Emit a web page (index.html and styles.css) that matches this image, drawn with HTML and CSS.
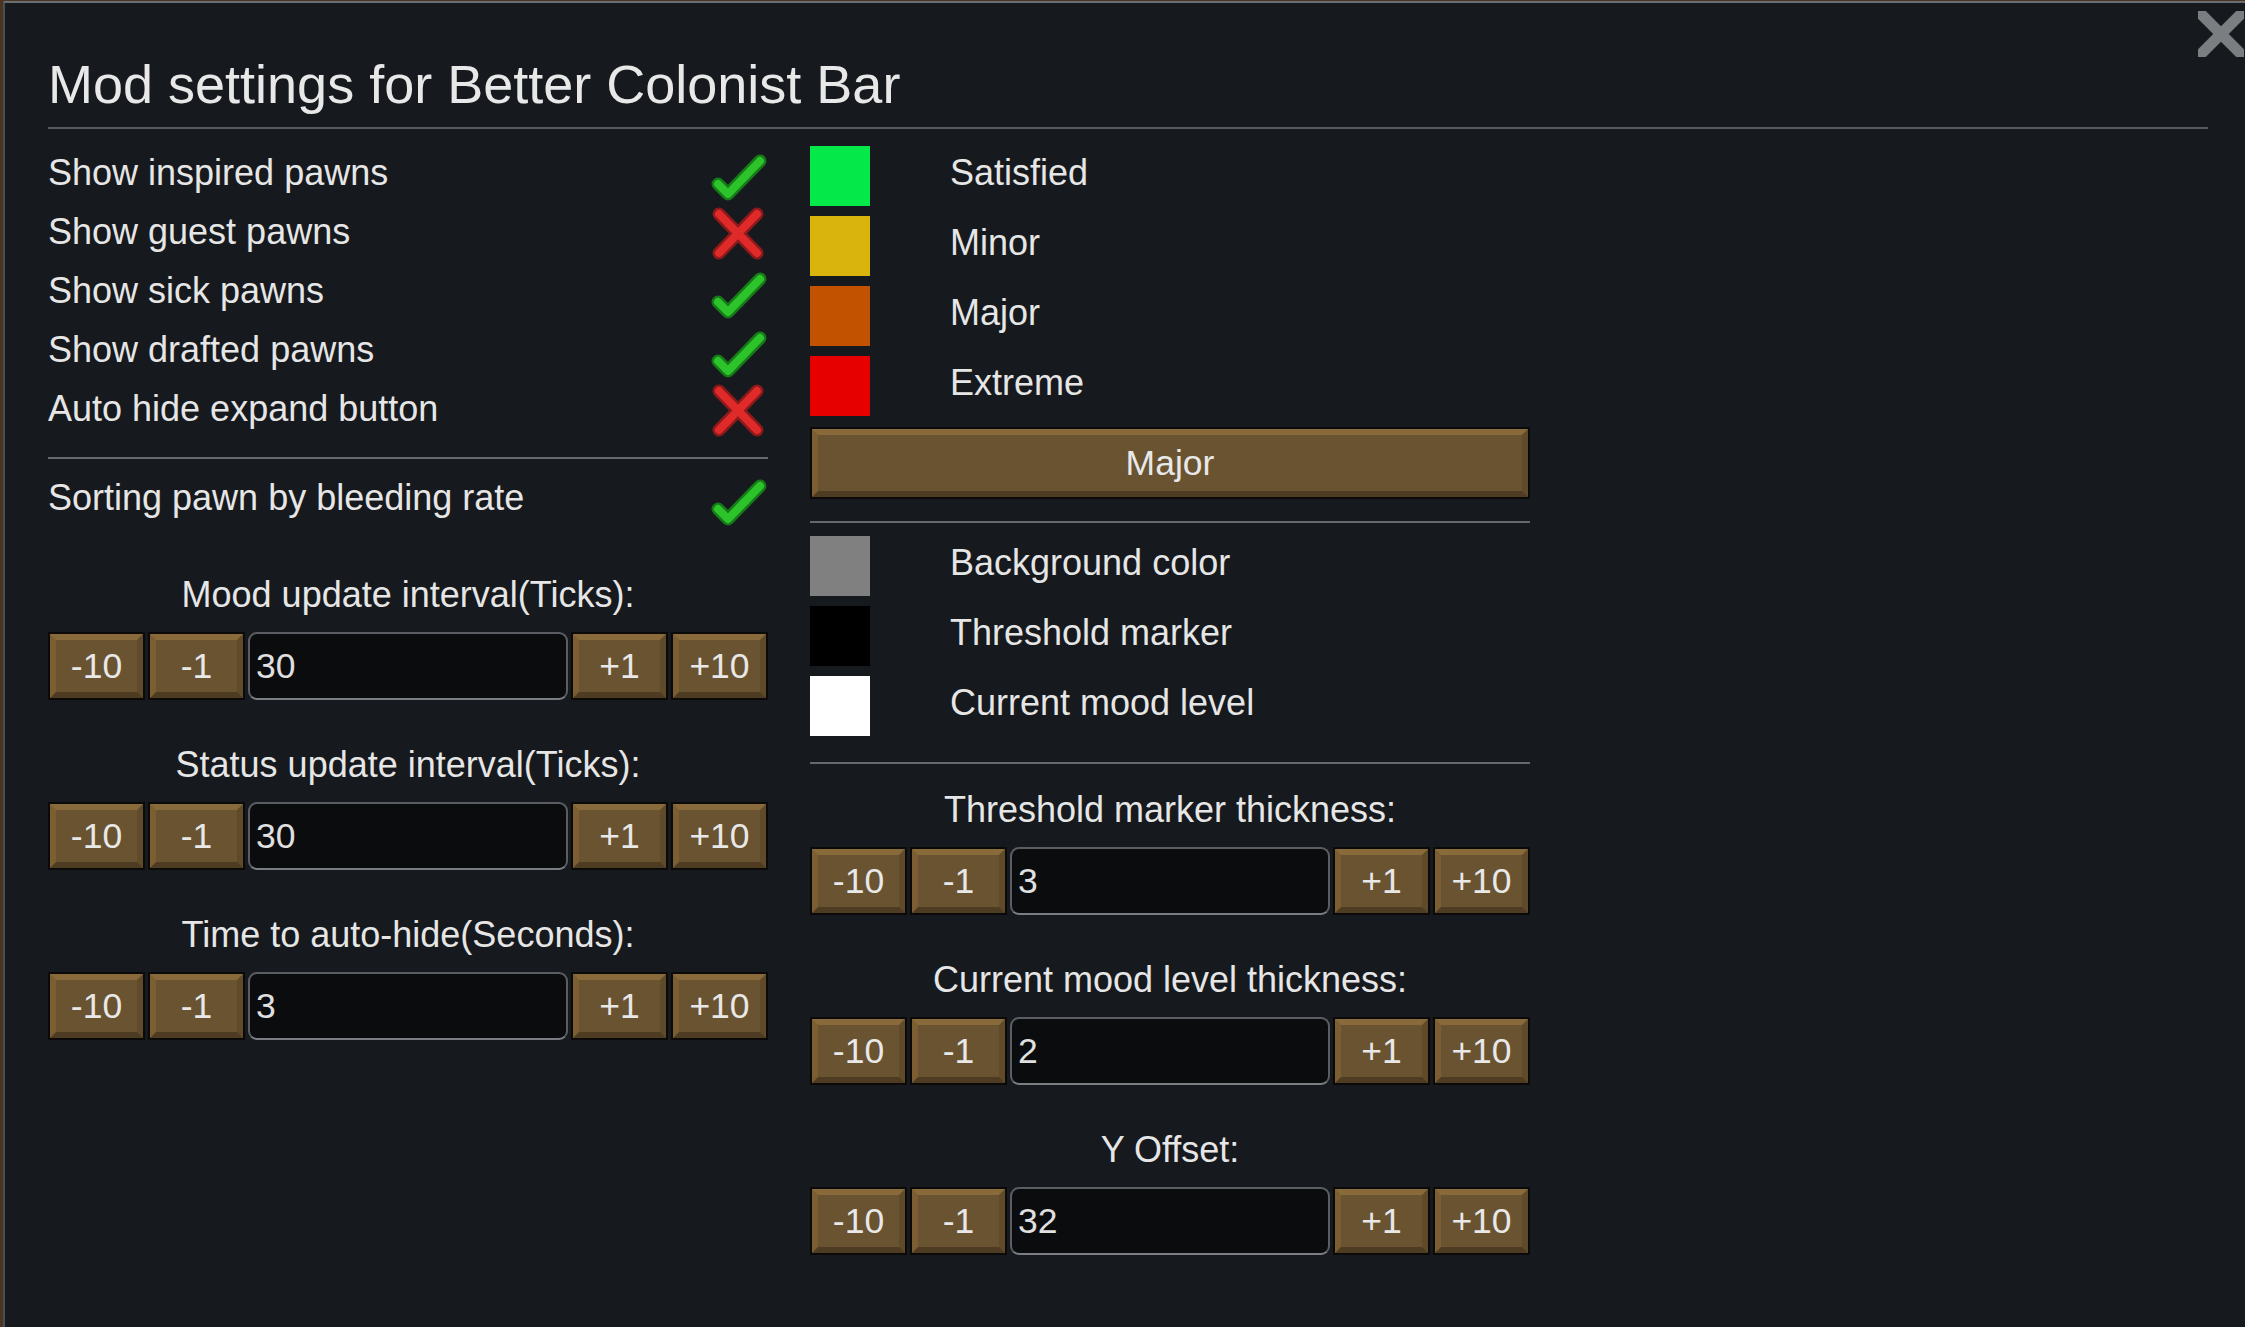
FILE: index.html
```html
<!DOCTYPE html>
<html lang="en">
<head>
<meta charset="utf-8">
<title>Mod settings for Better Colonist Bar</title>
<link rel="stylesheet" href="styles.css">
</head>
<body>
<div class="window">
  <svg class="close" width="46" height="46" viewBox="0 0 46 46">
    <line x1="-6" y1="-6" x2="52" y2="52" stroke="#7b7e81" stroke-width="11"/>
    <line x1="52" y1="-6" x2="-6" y2="52" stroke="#7b7e81" stroke-width="11"/>
  </svg>
  <h1 class="title">Mod settings for Better Colonist Bar</h1>
  <div class="title-rule"></div>
  <div class="cols">
    <div class="col col-left">
      <div class="check-row"><span>Show inspired pawns</span>
        <svg class="icon" width="57" height="57" viewBox="0 0 57 57"><path d="M8 37 L18 47 L50 14" class="ck-o"/><path d="M8 37 L18 47 L50 14" class="ck-i"/></svg></div>
      <div class="check-row"><span>Show guest pawns</span>
        <svg class="icon" width="57" height="57" viewBox="0 0 57 57"><path d="M9 8 L47 47 M47 8 L9 47" class="x-o"/><path d="M9 8 L47 47 M47 8 L9 47" class="x-i"/></svg></div>
      <div class="check-row"><span>Show sick pawns</span>
        <svg class="icon" width="57" height="57" viewBox="0 0 57 57"><path d="M8 37 L18 47 L50 14" class="ck-o"/><path d="M8 37 L18 47 L50 14" class="ck-i"/></svg></div>
      <div class="check-row"><span>Show drafted pawns</span>
        <svg class="icon" width="57" height="57" viewBox="0 0 57 57"><path d="M8 37 L18 47 L50 14" class="ck-o"/><path d="M8 37 L18 47 L50 14" class="ck-i"/></svg></div>
      <div class="check-row"><span>Auto hide expand button</span>
        <svg class="icon" width="57" height="57" viewBox="0 0 57 57"><path d="M9 8 L47 47 M47 8 L9 47" class="x-o"/><path d="M9 8 L47 47 M47 8 L9 47" class="x-i"/></svg></div>
      <div class="divider divider-left"></div>
      <div class="check-row"><span>Sorting pawn by bleeding rate</span>
        <svg class="icon" width="57" height="57" viewBox="0 0 57 57"><path d="M8 37 L18 47 L50 14" class="ck-o"/><path d="M8 37 L18 47 L50 14" class="ck-i"/></svg></div>

      <div class="section section-first-left">
        <div class="sec-label">Mood update interval(Ticks):</div>
        <div class="stepper">
          <div class="btn">-10</div><div class="btn">-1</div><div class="field">30</div><div class="btn">+1</div><div class="btn">+10</div>
        </div>
      </div>
      <div class="section">
        <div class="sec-label">Status update interval(Ticks):</div>
        <div class="stepper">
          <div class="btn">-10</div><div class="btn">-1</div><div class="field">30</div><div class="btn">+1</div><div class="btn">+10</div>
        </div>
      </div>
      <div class="section">
        <div class="sec-label">Time to auto-hide(Seconds):</div>
        <div class="stepper">
          <div class="btn">-10</div><div class="btn">-1</div><div class="field">3</div><div class="btn">+1</div><div class="btn">+10</div>
        </div>
      </div>
    </div>

    <div class="col col-right">
      <div class="swatch-group">
        <div class="swatch-row"><div class="swatch sw-green"></div><span class="sw-label">Satisfied</span></div>
        <div class="swatch-row"><div class="swatch sw-yellow"></div><span class="sw-label">Minor</span></div>
        <div class="swatch-row"><div class="swatch sw-orange"></div><span class="sw-label">Major</span></div>
        <div class="swatch-row"><div class="swatch sw-red"></div><span class="sw-label">Extreme</span></div>
      </div>
      <div class="btn btn-wide">Major</div>
      <div class="divider divider-r1"></div>
      <div class="swatch-group swatch-group-2">
        <div class="swatch-row"><div class="swatch sw-gray"></div><span class="sw-label">Background color</span></div>
        <div class="swatch-row"><div class="swatch sw-black"></div><span class="sw-label">Threshold marker</span></div>
        <div class="swatch-row"><div class="swatch sw-white"></div><span class="sw-label">Current mood level</span></div>
      </div>
      <div class="divider divider-r2"></div>

      <div class="section section-first-right">
        <div class="sec-label">Threshold marker thickness:</div>
        <div class="stepper">
          <div class="btn">-10</div><div class="btn">-1</div><div class="field">3</div><div class="btn">+1</div><div class="btn">+10</div>
        </div>
      </div>
      <div class="section">
        <div class="sec-label">Current mood level thickness:</div>
        <div class="stepper">
          <div class="btn">-10</div><div class="btn">-1</div><div class="field">2</div><div class="btn">+1</div><div class="btn">+10</div>
        </div>
      </div>
      <div class="section">
        <div class="sec-label">Y Offset:</div>
        <div class="stepper">
          <div class="btn">-10</div><div class="btn">-1</div><div class="field">32</div><div class="btn">+1</div><div class="btn">+10</div>
        </div>
      </div>
    </div>
  </div>
</div>
</body>
</html>
```

FILE: styles.css
```css
html, body {
  height: 100%;
}
body {
  margin: 0;
  overflow: hidden;
  background: #4a3422;
  font-family: "Liberation Sans", Arial, sans-serif;
  color: #e6e6e6;
}
.window {
  position: relative;
  box-sizing: border-box;
  margin: 1px 0 0 3px;
  height: calc(100% - 1px);
  background: #16191d;
  border-top: 2px solid #6a6e72;
  border-left: 2px solid #4a4e52;
  padding-left: 43px;
}
.close {
  position: absolute;
  left: 2193px;
  top: 8px;
}
.title {
  margin: 51px 0 0;
  height: 60px;
  font-size: 54px;
  line-height: 60px;
  font-weight: normal;
  color: #e8e8e8;
  white-space: nowrap;
}
.title-rule {
  margin-top: 13px;
  width: 2160px;
  height: 2px;
  background: #55585c;
}
.cols {
  display: flex;
  gap: 42px;
  margin-top: 12px;
}
.col {
  width: 720px;
  display: flex;
  flex-direction: column;
}
.col-right {
  padding-top: 5px;
}
.check-row {
  display: flex;
  justify-content: space-between;
  align-items: flex-start;
  height: 59px;
  font-size: 36px;
  white-space: nowrap;
}
.check-row span {
  padding-top: 4px;
  line-height: 55px;
}
.icon {
  margin-top: 6px;
  margin-right: 1px;
  flex: none;
}
.ck-o, .ck-i, .x-o, .x-i {
  fill: none;
  stroke-linecap: round;
  stroke-linejoin: round;
}
.ck-o { stroke: #167a18; stroke-width: 13; }
.ck-i { stroke: #2cc42a; stroke-width: 8; }
.x-o { stroke: #8c1a1a; stroke-width: 13; }
.x-i { stroke: #e02a2a; stroke-width: 8; }
.divider {
  height: 2px;
  background: #65686c;
}
.divider-left {
  margin: 21px 0 7px;
}
.section {
  margin-top: 34px;
}
.section-first-left {
  margin-top: 39px;
}
.section-first-right {
  margin-top: 15px;
}
.sec-label {
  box-sizing: border-box;
  height: 59px;
  padding-top: 2px;
  line-height: 57px;
  font-size: 36px;
  text-align: center;
  white-space: nowrap;
}
.stepper {
  margin-top: 9px;
  display: grid;
  grid-template-columns: 97px 97px 1fr 97px 97px;
  gap: 3px;
  height: 68px;
}
.btn {
  box-sizing: border-box;
  height: 68px;
  background: #6a5330;
  border-style: solid;
  border-width: 8px;
  border-top-color: #896b3b;
  border-left-color: #7b5f33;
  border-right-color: #5f4a2a;
  border-bottom-color: #4e3c22;
  outline: 2px solid #0b0a08;
  outline-offset: -2px;
  display: flex;
  align-items: center;
  justify-content: center;
  font-size: 35.5px;
  color: #e8e8e8;
  white-space: nowrap;
}
.field {
  box-sizing: border-box;
  height: 68px;
  background: #0b0c0e;
  border: 2px solid #5a5e62;
  border-bottom-color: #7a7e82;
  border-radius: 9px;
  padding-left: 6px;
  font-size: 35.5px;
  line-height: 64px;
  color: #e0e0e0;
}
.swatch-group {
  display: flex;
  flex-direction: column;
  gap: 10px;
}
.swatch-row {
  display: flex;
  align-items: flex-start;
  height: 60px;
}
.swatch {
  width: 60px;
  height: 60px;
  flex: none;
}
.sw-label {
  margin-left: 80px;
  line-height: 54px;
  font-size: 36px;
  white-space: nowrap;
}
.sw-green { background: #05e84a; }
.sw-yellow { background: #d9b40c; }
.sw-orange { background: #c35200; }
.sw-red { background: #e60000; }
.sw-gray { background: #808080; }
.sw-black { background: #000000; }
.sw-white { background: #ffffff; }
.btn-wide {
  margin-top: 11px;
  height: 72px;
  width: 100%;
}
.divider-r1 {
  margin-top: 22px;
}
.swatch-group-2 {
  margin-top: 13px;
}
.divider-r2 {
  margin-top: 26px;
}
```
